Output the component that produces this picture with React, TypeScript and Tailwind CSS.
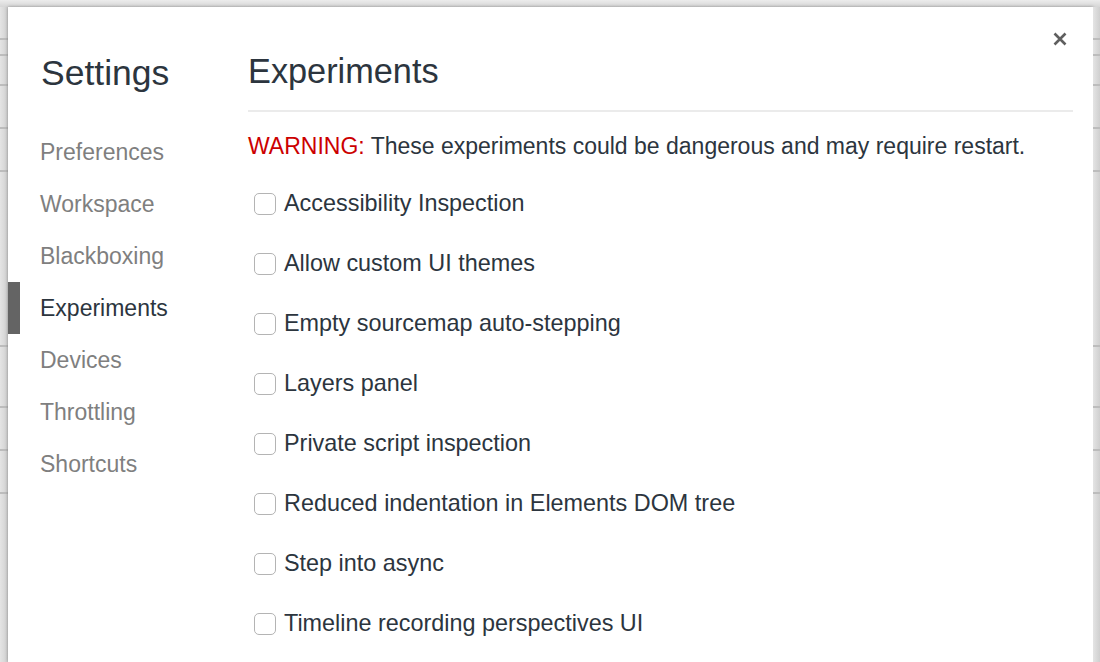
import React from "react";

const sections = [
  "Preferences",
  "Workspace",
  "Blackboxing",
  "Experiments",
  "Devices",
  "Throttling",
  "Shortcuts",
];

const experiments = [
  "Accessibility Inspection",
  "Allow custom UI themes",
  "Empty sourcemap auto-stepping",
  "Layers panel",
  "Private script inspection",
  "Reduced indentation in Elements DOM tree",
  "Step into async",
  "Timeline recording perspectives UI",
];

// faint rows of the panel that sits behind the dialog
const backdropLines = [31, 47, 77, 120, 163, 338, 399, 442, 485];

function BackdropStrip({ width }: { width: string }) {
  return (
    <div className={`relative h-full ${width} bg-gradient-to-r from-[#e4e4e4] to-[#cfcfcf]`}>
      {backdropLines.map((y) => (
        <div
          key={y}
          className="absolute left-0 right-0 h-[2px] bg-[#bcbcbc]"
          style={{ top: y }}
        />
      ))}
    </div>
  );
}

function CloseIcon() {
  return (
    <svg width="14" height="14" viewBox="0 0 14 14" fill="none">
      <path
        d="M1.5 1.5 L12.5 12.5 M12.5 1.5 L1.5 12.5"
        stroke="#5f5f5f"
        strokeWidth="2.6"
      />
    </svg>
  );
}

export default function App() {
  const active = "Experiments";

  return (
    <div
      className="flex h-[662px] w-[1100px] flex-col overflow-hidden bg-[#dedede]"
      style={{ fontFamily: '"Liberation Sans", Arial, sans-serif' }}
    >
      <div className="h-[7px] bg-gradient-to-b from-[#ececec] to-[#d6d6d6]" />
      <div className="flex flex-1">
        <BackdropStrip width="w-[8px]" />

        <div className="relative flex flex-1 bg-white shadow-[0_0_3px_rgba(0,0,0,0.35)]">
          <button className="absolute right-[26px] top-[25px] flex h-[14px] w-[14px] items-center justify-center">
            <CloseIcon />
          </button>

          <aside className="w-[240px] shrink-0 pt-[46px]">
            <h1 className="pl-[33px] text-[35.5px] leading-[40px] text-[#2c353e]">
              Settings
            </h1>
            <nav className="mt-[33px] flex flex-col">
              {sections.map((s) =>
                s === active ? (
                  <div
                    key={s}
                    className="flex h-[52px] items-center border-l-[12px] border-[#646464] pl-[20px] text-[23px] text-[#2c353e]"
                  >
                    {s}
                  </div>
                ) : (
                  <div
                    key={s}
                    className="flex h-[52px] items-center pl-[32px] text-[23px] text-[#7f7f7f]"
                  >
                    {s}
                  </div>
                )
              )}
            </nav>
          </aside>

          <main className="flex-1 pr-[20px] pt-[44px]">
            <h2 className="text-[34.3px] leading-[40px] text-[#2c353e]">
              Experiments
            </h2>
            <div className="mt-[19px] h-[2px] bg-[#ebebeb]" />
            <p className="mt-[20px] text-[23px] leading-[28px] text-[#2c353e]">
              <span className="text-[#cc0000]">WARNING:</span> These experiments
              could be dangerous and may require restart.
            </p>
            <div className="mt-[14px] flex flex-col">
              {experiments.map((e) => (
                <label
                  key={e}
                  className="flex h-[60px] items-center gap-[8px] pl-[6px] text-[23.4px] text-[#2c353e]"
                >
                  <span className="h-[22px] w-[22px] shrink-0 rounded-[5px] border border-[#b4b4b4] bg-white" />
                  {e}
                </label>
              ))}
            </div>
          </main>
        </div>

        <BackdropStrip width="w-[7px]" />
      </div>
    </div>
  );
}
